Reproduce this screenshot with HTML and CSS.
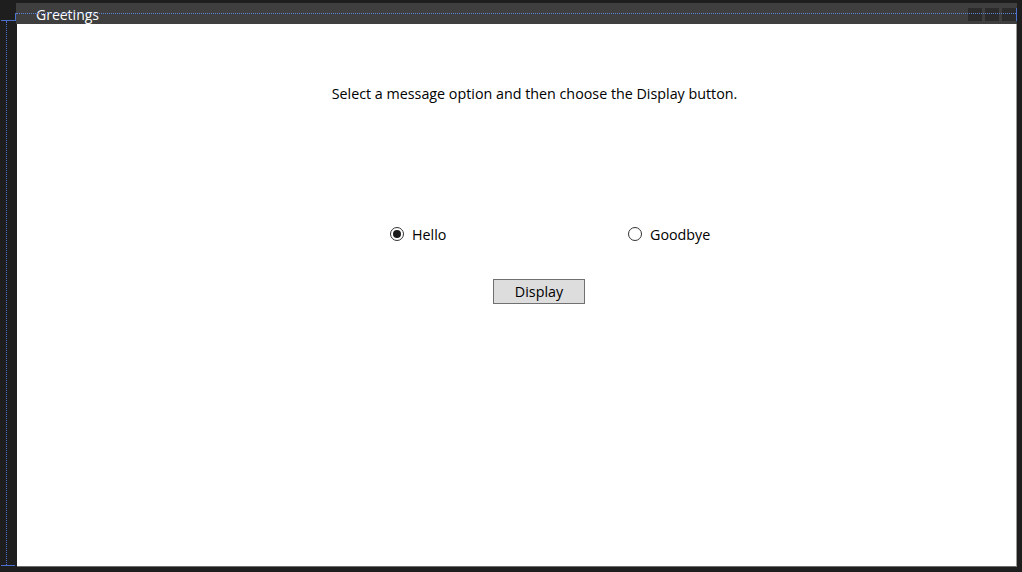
FILE: index.html
```html
<!DOCTYPE html>
<html>
<head>
<meta charset="utf-8">
<link rel="stylesheet" href="styles.css">
</head>
<body>
<div class="stage">
  <div class="window">
    <div class="titlebar">
      <span class="title">Greetings</span>
      <div class="tb-buttons">
        <span class="tb-btn"></span>
        <span class="tb-btn"></span>
        <span class="tb-btn"></span>
      </div>
    </div>
    <div class="content">
      <p class="prompt">Select a message option and then choose the Display button.</p>
      <div class="radios">
        <label class="radio"><span class="dot checked"></span><span class="rlabel">Hello</span></label>
        <label class="radio"><span class="dot"></span><span class="rlabel">Goodbye</span></label>
      </div>
      <div class="btn-row"><button class="display-btn">Display</button></div>
    </div>
  </div>
  <div class="adorn-h-top"></div>
  <div class="adorn-corner"></div>
  <div class="adorn-left-stub"></div>
  <div class="adorn-v-left"></div>
  <div class="adorn-bottom-stub"></div>
  <div class="adorn-right"></div>
</div>
</body>
</html>
```
FILE: styles.css
```css
html, body {
  margin: 0;
  padding: 0;
  background: #1e1e1e;
  width: 1022px;
  height: 572px;
  overflow: hidden;
  font-family: "Open Sans", "Noto Sans", sans-serif;
}
.stage {
  position: relative;
  width: 1022px;
  height: 572px;
  padding-top: 3px;
  box-sizing: border-box;
}
.window {
  margin-left: 16px;
  width: 1001px;
  display: flex;
  flex-direction: column;
}
.titlebar {
  height: 21px;
  background: #3f3f3f;
  display: flex;
  align-items: center;
  justify-content: space-between;
}
.title {
  color: #ffffff;
  font-size: 14px;
  margin-left: 20px;
  line-height: 21px;
  padding-top: 2px;
}
.tb-buttons {
  display: flex;
  gap: 3px;
  margin-right: 1px;
  margin-top: 1px;
}
.tb-btn {
  width: 14px;
  height: 13px;
  background: #2b2b2b;
}
.content {
  background: #ffffff;
  height: 542px;
  margin-left: 1px;
  width: 999px;
  border-bottom: 1px solid #6e6e6e;
  border-right: 1px solid #9a9a9a;
  color: #000;
}
.prompt {
  margin: 0;
  padding-top: 60px;
  padding-left: 36px;
  text-align: center;
  font-size: 14.3px;
  line-height: 20px;
}
.radios {
  display: flex;
  margin-top: 120px;
  padding-left: 373px;
}
.radio {
  width: 238px;
  display: flex;
  align-items: center;
  gap: 8px;
  font-size: 14.3px;
  height: 20px;
}
.dot {
  width: 12px;
  height: 12px;
  border: 1px solid #333;
  border-radius: 50%;
  display: flex;
  align-items: center;
  justify-content: center;
  box-sizing: content-box;
}
.dot.checked::after {
  content: "";
  width: 8px;
  height: 8px;
  border-radius: 50%;
  background: #1a1a1a;
}
.btn-row {
  margin-top: 35px;
  padding-left: 476px;
}
.display-btn {
  width: 92px;
  height: 25px;
  background: #dddddd;
  border: 1px solid #707070;
  font-family: inherit;
  font-size: 14.3px;
  color: #000;
  padding: 0;
}
.adorn-h-top {
  position: absolute;
  left: 16px;
  top: 13px;
  width: 1000px;
  border-top: 1px dotted #5b82d6;
}
.adorn-corner {
  position: absolute;
  left: 15px;
  top: 13px;
  height: 8px;
  border-left: 1px solid #4a6fcf;
}
.adorn-left-stub {
  position: absolute;
  left: 1px;
  top: 20px;
  width: 15px;
  border-top: 1px solid #4a6fcf;
}
.adorn-v-left {
  position: absolute;
  left: 6px;
  top: 21px;
  height: 544px;
  border-left: 1px dotted #4a6fcf;
}
.adorn-bottom-stub {
  position: absolute;
  left: 1px;
  top: 565px;
  width: 14px;
  border-top: 1px solid #4a6fcf;
}
.adorn-right {
  position: absolute;
  left: 1016px;
  top: 8px;
  height: 13px;
  border-left: 1px solid #4a6fcf;
}
```
